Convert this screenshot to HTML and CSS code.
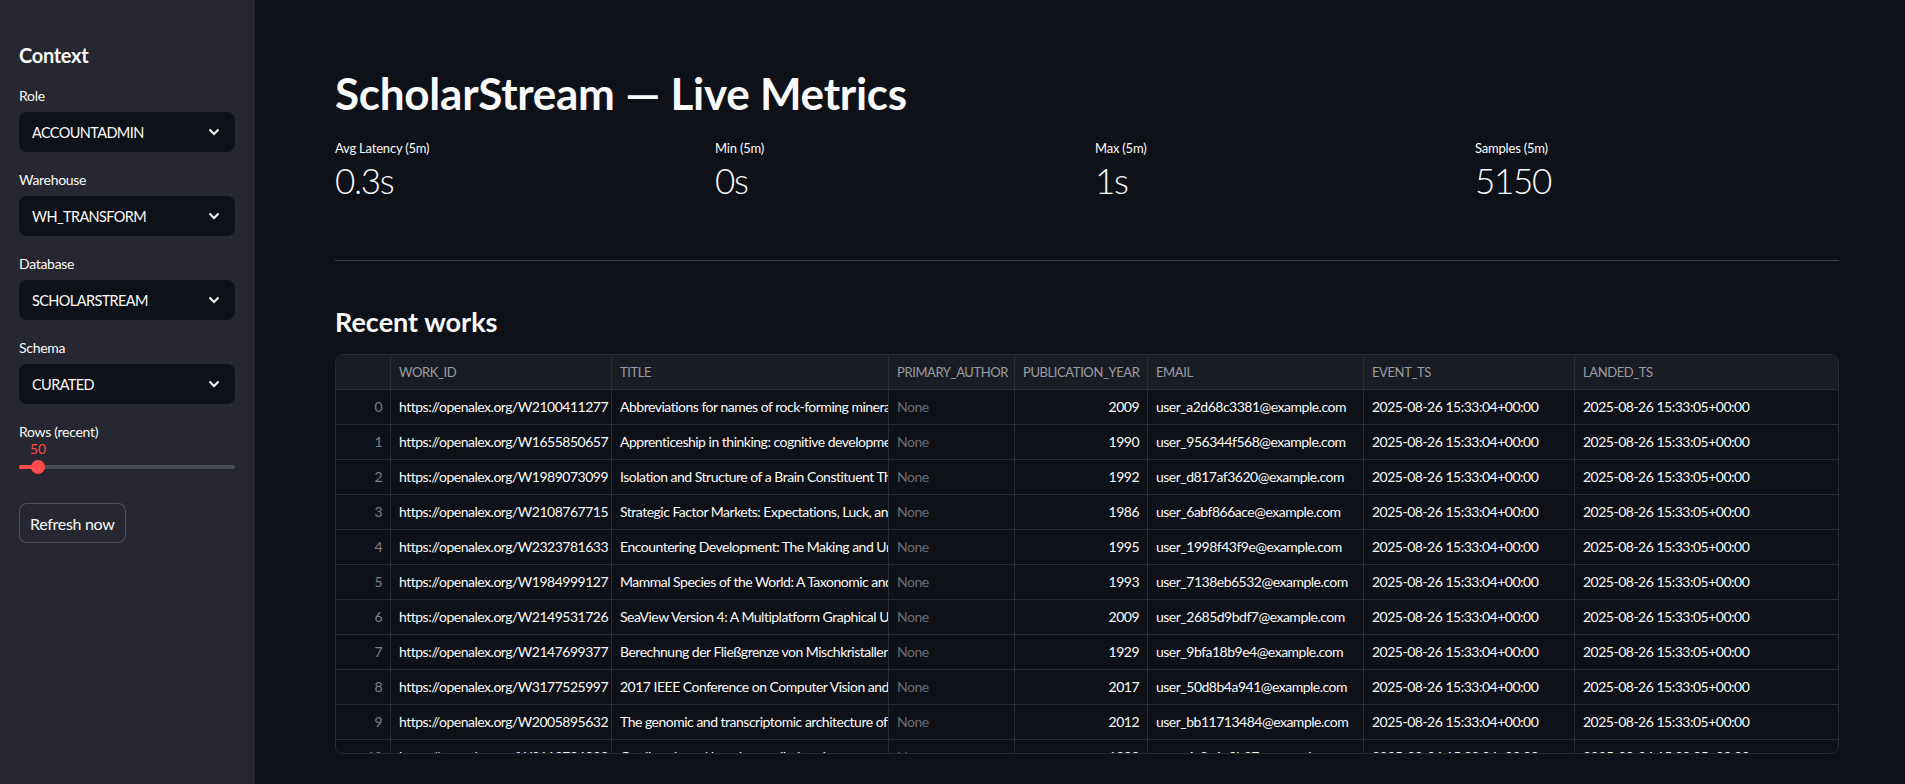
FILE: index.html
```html
<!DOCTYPE html>
<html lang="en">
<head>
<meta charset="utf-8">
<title>ScholarStream — Live Metrics</title>
<link rel="stylesheet" href="styles.css">
</head>
<body>
<div class="app">
  <aside class="sidebar">
    <h2 class="side-title">Context</h2>
    <div class="field">
      <div class="label">Role</div>
      <div class="select"><span>ACCOUNTADMIN</span><svg class="chev" viewBox="0 0 12 8" width="12" height="8"><polyline points="1.5,1.5 6,6 10.5,1.5" fill="none" stroke="#fafafa" stroke-width="2"/></svg></div>
    </div>
    <div class="field">
      <div class="label">Warehouse</div>
      <div class="select"><span>WH_TRANSFORM</span><svg class="chev" viewBox="0 0 12 8" width="12" height="8"><polyline points="1.5,1.5 6,6 10.5,1.5" fill="none" stroke="#fafafa" stroke-width="2"/></svg></div>
    </div>
    <div class="field">
      <div class="label">Database</div>
      <div class="select"><span>SCHOLARSTREAM</span><svg class="chev" viewBox="0 0 12 8" width="12" height="8"><polyline points="1.5,1.5 6,6 10.5,1.5" fill="none" stroke="#fafafa" stroke-width="2"/></svg></div>
    </div>
    <div class="field">
      <div class="label">Schema</div>
      <div class="select"><span>CURATED</span><svg class="chev" viewBox="0 0 12 8" width="12" height="8"><polyline points="1.5,1.5 6,6 10.5,1.5" fill="none" stroke="#fafafa" stroke-width="2"/></svg></div>
    </div>
    <div class="field">
      <div class="label">Rows (recent)</div>
      <div class="slider">
        <div class="track">
          <div class="fill"></div>
          <div class="thumb"><span class="thumb-val">50</span></div>
        </div>
      </div>
    </div>
    <button class="btn">Refresh now</button>
  </aside>

  <main class="main">
    <h1 class="title">ScholarStream — Live Metrics</h1>
    <div class="metrics">
      <div class="metric"><div class="m-label">Avg Latency (5m)</div><div class="m-value">0.3s</div></div>
      <div class="metric"><div class="m-label">Min (5m)</div><div class="m-value">0s</div></div>
      <div class="metric"><div class="m-label">Max (5m)</div><div class="m-value">1s</div></div>
      <div class="metric"><div class="m-label">Samples (5m)</div><div class="m-value">5150</div></div>
    </div>
    <hr class="divider">
    <h3 class="subtitle">Recent works</h3>
    <div class="grid-wrap">
      <div class="grid">
        <div class="row head">
          <div class="c idx"></div><div class="c">WORK_ID</div><div class="c">TITLE</div><div class="c">PRIMARY_AUTHOR</div><div class="c">PUBLICATION_YEAR</div><div class="c">EMAIL</div><div class="c">EVENT_TS</div><div class="c">LANDED_TS</div>
        </div>
        <div class="row"><div class="c idx">0</div><div class="c">https://openalex.org/W2100411277</div><div class="c">Abbreviations for names of rock-forming minerals</div><div class="c none">None</div><div class="c num">2009</div><div class="c">user_a2d68c3381@example.com</div><div class="c">2025-08-26 15:33:04+00:00</div><div class="c">2025-08-26 15:33:05+00:00</div></div>
        <div class="row"><div class="c idx">1</div><div class="c">https://openalex.org/W1655850657</div><div class="c">Apprenticeship in thinking: cognitive development in social context</div><div class="c none">None</div><div class="c num">1990</div><div class="c">user_956344f568@example.com</div><div class="c">2025-08-26 15:33:04+00:00</div><div class="c">2025-08-26 15:33:05+00:00</div></div>
        <div class="row"><div class="c idx">2</div><div class="c">https://openalex.org/W1989073099</div><div class="c">Isolation and Structure of a Brain Constituent That Binds to the Cannabinoid Receptor</div><div class="c none">None</div><div class="c num">1992</div><div class="c">user_d817af3620@example.com</div><div class="c">2025-08-26 15:33:04+00:00</div><div class="c">2025-08-26 15:33:05+00:00</div></div>
        <div class="row"><div class="c idx">3</div><div class="c">https://openalex.org/W2108767715</div><div class="c">Strategic Factor Markets: Expectations, Luck, and Business Strategy</div><div class="c none">None</div><div class="c num">1986</div><div class="c">user_6abf866ace@example.com</div><div class="c">2025-08-26 15:33:04+00:00</div><div class="c">2025-08-26 15:33:05+00:00</div></div>
        <div class="row"><div class="c idx">4</div><div class="c">https://openalex.org/W2323781633</div><div class="c">Encountering Development: The Making and Unmaking of the Third World</div><div class="c none">None</div><div class="c num">1995</div><div class="c">user_1998f43f9e@example.com</div><div class="c">2025-08-26 15:33:04+00:00</div><div class="c">2025-08-26 15:33:05+00:00</div></div>
        <div class="row"><div class="c idx">5</div><div class="c">https://openalex.org/W1984999127</div><div class="c">Mammal Species of the World: A Taxonomic and Geographic Reference</div><div class="c none">None</div><div class="c num">1993</div><div class="c">user_7138eb6532@example.com</div><div class="c">2025-08-26 15:33:04+00:00</div><div class="c">2025-08-26 15:33:05+00:00</div></div>
        <div class="row"><div class="c idx">6</div><div class="c">https://openalex.org/W2149531726</div><div class="c">SeaView Version 4: A Multiplatform Graphical User Interface for Sequence Alignment</div><div class="c none">None</div><div class="c num">2009</div><div class="c">user_2685d9bdf7@example.com</div><div class="c">2025-08-26 15:33:04+00:00</div><div class="c">2025-08-26 15:33:05+00:00</div></div>
        <div class="row"><div class="c idx">7</div><div class="c">https://openalex.org/W2147699377</div><div class="c">Berechnung der Fließgrenze von Mischkristallen auf Grund der Plastizitätsbedingung</div><div class="c none">None</div><div class="c num">1929</div><div class="c">user_9bfa18b9e4@example.com</div><div class="c">2025-08-26 15:33:04+00:00</div><div class="c">2025-08-26 15:33:05+00:00</div></div>
        <div class="row"><div class="c idx">8</div><div class="c">https://openalex.org/W3177525997</div><div class="c">2017 IEEE Conference on Computer Vision and Pattern Recognition (CVPR)</div><div class="c none">None</div><div class="c num">2017</div><div class="c">user_50d8b4a941@example.com</div><div class="c">2025-08-26 15:33:04+00:00</div><div class="c">2025-08-26 15:33:05+00:00</div></div>
        <div class="row"><div class="c idx">9</div><div class="c">https://openalex.org/W2005895632</div><div class="c">The genomic and transcriptomic architecture of 2,000 breast tumours</div><div class="c none">None</div><div class="c num">2012</div><div class="c">user_bb11713484@example.com</div><div class="c">2025-08-26 15:33:04+00:00</div><div class="c">2025-08-26 15:33:05+00:00</div></div>
        <div class="row"><div class="c idx">10</div><div class="c">https://openalex.org/W2112796928</div><div class="c">Gradient-based learning applied to document recognition</div><div class="c none">None</div><div class="c num">1998</div><div class="c">user_4c0e1a9b27@example.com</div><div class="c">2025-08-26 15:33:04+00:00</div><div class="c">2025-08-26 15:33:05+00:00</div></div>
      </div>
    </div>
  </main>
</div>
</body>
</html>
```

FILE: styles.css
```css
* { box-sizing: border-box; }

html, body {
  margin: 0;
  padding: 0;
  height: 100%;
  background: #0e1117;
  color: #fafafa;
  font-family: "Source Sans Pro", Lato, "Noto Sans", sans-serif;
  overflow: hidden;
}

.app {
  display: flex;
  height: 784px;
}

/* Sidebar */
.sidebar {
  width: 255px;
  flex: 0 0 255px;
  background: #262730;
  padding: 40px 20px 0 19px;
  display: flex;
  flex-direction: column;
  align-items: stretch;
}

.side-title {
  margin: 0 0 14px 0;
  font-size: 20px;
  font-weight: 700;
  line-height: 30px;
  letter-spacing: -0.3px;
  color: #fafafa;
}

.field {
  display: flex;
  flex-direction: column;
  margin-bottom: 16px;
}

.label {
  height: 24px;
  line-height: 24px;
  font-size: 14px;
  letter-spacing: -0.3px;
  margin-bottom: 4px;
  color: #fafafa;
}

.select {
  height: 40px;
  background: #0e1117;
  border-radius: 8px;
  display: flex;
  align-items: center;
  justify-content: space-between;
  padding: 0 15px 0 13px;
  font-size: 14.5px;
  letter-spacing: -0.6px;
  color: #fafafa;
}

.chev { display: block; }

.slider {
  height: 43px;
  padding-top: 21px;
  margin-top: -4px;
}

.track {
  position: relative;
  height: 4px;
  border-radius: 2px;
  background: #4a4c56;
}

.fill {
  width: 18px;
  height: 4px;
  border-radius: 2px;
  background: #ff4b4b;
}

.thumb {
  position: absolute;
  left: 12px;
  top: -5px;
  width: 14px;
  height: 14px;
  border-radius: 50%;
  background: #ff4b4b;
}

.thumb-val {
  position: absolute;
  left: 50%;
  transform: translateX(-50%);
  top: -21px;
  font-size: 14px;
  line-height: 20px;
  color: #ff4b4b;
}

.btn {
  align-self: flex-start;
  height: 40px;
  padding: 0 10px;
  background: #262730;
  border: 1px solid rgba(250, 250, 250, 0.2);
  border-radius: 8px;
  color: #fafafa;
  font-family: inherit;
  font-size: 16px;
  letter-spacing: -0.3px;
  margin-top: 0;
}

/* Main */
.main {
  flex: 1;
  padding: 65px 66px 0 80px;
  min-width: 0;
}

.title {
  margin: 0;
  font-size: 44px;
  font-weight: 700;
  line-height: 56px;
  letter-spacing: -0.25px;
}

.metrics {
  display: grid;
  grid-template-columns: repeat(4, 1fr);
  gap: 16px;
  margin-top: 17px;
}

.m-label {
  font-size: 13px;
  line-height: 20px;
  letter-spacing: -0.2px;
  color: #fafafa;
}

.m-value {
  font-size: 35px;
  font-weight: 300;
  line-height: 44px;
  letter-spacing: -1.3px;
  margin-top: 0;
}

.divider {
  margin: 58px 0 0 0;
  border: none;
  border-top: 1px solid rgba(250, 250, 250, 0.2);
  height: 0;
}

.subtitle {
  margin: 43px 0 0 0;
  font-size: 27px;
  font-weight: 700;
  line-height: 36px;
}

.grid-wrap {
  margin-top: 14px;
  height: 400px;
  border: 1px solid #2a2c34;
  border-radius: 8px;
  overflow: hidden;
}

.row {
  display: grid;
  grid-template-columns: 55px 221px 277px 126px 133px 216px 211px 1fr;
  height: 35px;
}

.c {
  height: 35px;
  line-height: 34px;
  padding: 0 8px;
  border-right: 1px solid #2a2c34;
  border-bottom: 1px solid #2a2c34;
  font-size: 14px;
  letter-spacing: -0.5px;
  white-space: nowrap;
  overflow: hidden;
  color: #fafafa;
}

.c:last-child { border-right: none; }

.head .c {
  background: #1a1c23;
  color: #9a9ca3;
  font-size: 13px;
  letter-spacing: -0.4px;
}

.idx {
  text-align: right;
  color: #7d8087;
}

.num { text-align: right; }

.none { color: #6a6d74; }
```
